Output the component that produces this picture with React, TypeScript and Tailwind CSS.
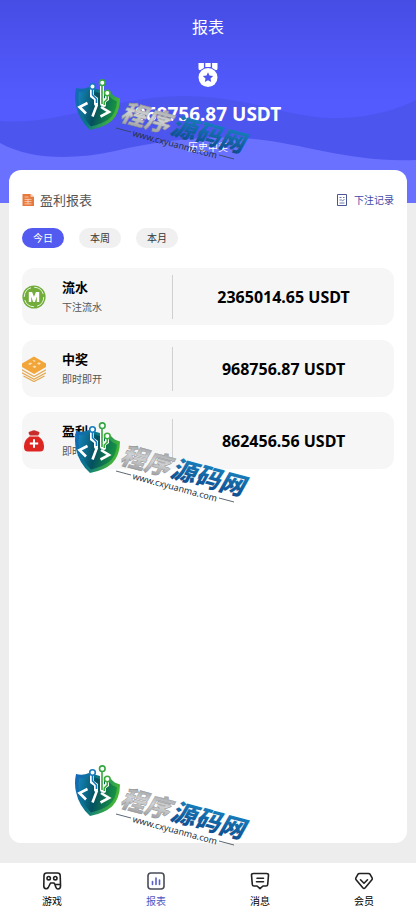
import { useState } from 'react';
import type { ReactNode } from 'react';

const tabs = ['今日', '本周', '本月'];

function MedalIcon() {
  return (
    <svg viewBox="0 0 24 24" className="h-6 w-6" fill="#fff" aria-hidden="true">
      <path d="M2.500 0h5.400v5L4 7.200Q2.500 7 2.500 5.500zM9.300 0h5.400v4H9.300zM16.100 0h5.400v5.500q0 1.500-1.500 1.700L16.100 5z" />
      <circle cx="12" cy="14.500" r="9.500" />
      <path d="m12 9.300 1.500 3.300 3.700.4-2.700 2.500.7 3.600-3.200-1.800-3.200 1.800.7-3.600L6.800 13l3.700-.4z" fill="#4f57ee" />
    </svg>
  );
}

function ReportIcon() {
  return (
    <svg viewBox="0 0 12 12" className="h-3 w-3" aria-hidden="true">
      <path d="M.5 0h8L12 3v9H.5z" fill="#e8793c" />
      <path d="M8.500 0v3H12" fill="#f7c7a8" />
      <path d="M2.500 3h4M2.500 5.400h7M2.500 7.600h7M2.500 9.900h7M6 5v5" stroke="#fbd9c3" strokeWidth=".8" fill="none" />
    </svg>
  );
}

function RecordIcon() {
  return (
    <svg viewBox="0 0 12 14" className="h-[14px] w-3" fill="none" stroke="#4a5596" aria-hidden="true">
      <path d="M1.500 1.500h9v11h-9z" />
      <path d="M3.500 4.500h2M7 4.500h1.500M3.500 7h2l1 .7 2-1.200M3.500 10h5" strokeWidth=".8" />
    </svg>
  );
}

function CoinIcon() {
  return (
    <svg viewBox="0 0 24 24" className="h-6 w-6" aria-hidden="true">
      <circle cx="12" cy="12" r="11.600" fill="#72ad3c" />
      <circle cx="12" cy="12" r="9.700" fill="none" stroke="#e4f2d6" strokeWidth="1" strokeDasharray="12 3.200" />
      <path d="M6.800 17V7h3.300l1.900 4.800L13.900 7h3.300v10h-2.400v-5.500L12.900 17h-1.800l-1.900-5.500V17z" fill="#fff" />
    </svg>
  );
}

function LayersIcon() {
  return (
    <svg viewBox="0 0 24 26" className="h-[26px] w-6" aria-hidden="true">
      <path d="M12 .5 24 7.500v3.500L12 18 0 11V7.500z" fill="#f2a63a" />
      <path d="m6 8 2.600-1.500 1.800 1-2.600 1.500zM10.500 4.800l1.500-.9 1.800 1-1.500.9zM15 7.500l2-1.200L19 7.500l-2 1.200zM10.500 10.700l2-1.200 2 1.200-2 1.200z" fill="#fbe2ba" />
      <path d="m0 13.800 12 6.700 12-6.700M0 16.800l12 6.500 12-6.500M1.500 20 12 25.500 22.500 20" fill="none" stroke="#e5aa51" strokeWidth="1.300" />
    </svg>
  );
}

function BagIcon() {
  return (
    <svg viewBox="0 0 24 24" className="h-6 w-6" aria-hidden="true">
      <path d="M6.500 4q0-1.500 1.500-1.500 1.200 0 2-.8 2-1 4 0 .8.8 2 .8 1.500 0 1.500 1.500L16.200 6.500H7.800z" fill="#c92d2b" />
      <path d="M7.500 7.500h9Q22 11.500 22 17v1q0 4.500-4 4.500H6q-4 0-4-4.500v-1q0-5.500 5.500-9.500z" fill="#dd2622" />
      <path d="M12 10.300v8.400M7.800 14.500h8.400" stroke="#fff" strokeWidth="2" />
    </svg>
  );
}

const stats = [
  { title: '流水', note: '下注流水', amount: '2365014.65 USDT', icon: <CoinIcon /> },
  { title: '中奖', note: '即时即开', amount: '968756.87 USDT', icon: <LayersIcon /> },
  { title: '盈利', note: '即时即开', amount: '862456.56 USDT', icon: <BagIcon /> },
];

function NavIcon({ children }: { children: ReactNode }) {
  return (
    <svg
      viewBox="0 0 20 20"
      className="h-5 w-5"
      fill="none"
      stroke="#222"
      strokeWidth="1.600"
      strokeLinejoin="round"
      strokeLinecap="round"
      aria-hidden="true"
    >
      {children}
    </svg>
  );
}

const navItems = [
  {
    label: '游戏',
    icon: (
      <NavIcon>
        <path d="M4.500 2h11q2.500 0 2.700 2.500l.3 9H13l-1-1.500H8.500l-2.200 4.500q-.8 1.300-2.300 1.200-2.200-.2-2.200-2.700L2 4.500Q2.200 2 4.500 2zM18.500 13.500v1.500q0 3-2.500 3-2 0-3-4.500" />
        <circle cx="6.700" cy="7.200" r="1.700" />
        <circle cx="13.300" cy="7.200" r="1.700" />
      </NavIcon>
    ),
  },
  {
    label: '报表',
    icon: (
      <NavIcon>
        <rect x="2" y="2" width="16" height="16" rx="3" stroke="#4a4c58" />
        <path d="M6.500 10.500v3M10 7v6.500M13.500 9v4.500" stroke="#5560c8" />
      </NavIcon>
    ),
  },
  {
    label: '消息',
    icon: (
      <NavIcon>
        <path d="M3.500 2.500h13q2 0 2 1.500l-.8 9.500q-.2 1.500-1.700 1.500h-3l-3 2.700L7 15H4q-1.500 0-1.700-1.500L1.500 4q0-1.500 2-1.500z" />
        <path d="M7 7.200h6.500M6.500 10.800h7" />
      </NavIcon>
    ),
  },
  {
    label: '会员',
    icon: (
      <NavIcon>
        <path d="M5.500 2.500h9q1 0 1.600.8l2 3.500q.6 1-.2 1.900l-6.700 8q-1.200 1.300-2.400 0l-6.700-8q-.8-.9-.2-1.900l2-3.500q.6-.8 1.600-.8z" />
        <path d="m6.500 8.800 3.500 3.500 3.500-3.500" />
      </NavIcon>
    ),
  },
];

function Waves() {
  return (
    <svg
      viewBox="0 0 416 203"
      preserveAspectRatio="none"
      className="absolute inset-0 h-full w-full"
      aria-hidden="true"
    >
      <path d="M0 121C60 126 110 97 180 96C250 95 290 120 340 118C375 117 400 108 416 100V203H0z" fill="#4d55ef" />
      <path d="M0 143C30 160 75 160 115 151C155 142 195 136 240 138C300 141 345 163 416 160V203H0z" fill="#6a71ff" />
    </svg>
  );
}

function Watermark({ id }: { id: string }) {
  return (
    <svg viewBox="0 0 190 90" className="h-[90px] w-[190px]">
      <defs>
        <linearGradient id={`${id}-shield`} x1="0" y1="0" x2="1" y2="0.300">
          <stop offset="0" stopColor="#1769c0" />
          <stop offset=".45" stopColor="#087488" />
          <stop offset="1" stopColor="#45b535" />
        </linearGradient>
        <linearGradient id={`${id}-inner`} x1="0" y1="0" x2="1" y2="0.200">
          <stop offset="0" stopColor="#1686bd" />
          <stop offset=".5" stopColor="#04505f" />
          <stop offset="1" stopColor="#169044" />
        </linearGradient>
        <linearGradient id={`${id}-silver`} x1="0" y1="0" x2="0" y2="1">
          <stop offset="0" stopColor="#85878a" />
          <stop offset=".5" stopColor="#d2d3d4" />
          <stop offset="1" stopColor="#909295" />
        </linearGradient>
        <linearGradient id={`${id}-blue`} x1="0" y1="0" x2="0" y2="1">
          <stop offset="0" stopColor="#1c8dc9" />
          <stop offset="1" stopColor="#0b4588" />
        </linearGradient>
      </defs>
      <path d="M6 13q7 2 13-1l22 6q3 4 9 5.500 0 14-8 22-8 7-22 9.500Q9 45 6 31 4 22 6 13z" fill={`url(#${id}-shield)`} />
      <path d="M9 17q6 1 11-2l19 6q3 4 8 5.500-1 12-8 17.500-7 5-18 7.500-9-9-12-21-1-7 0-13.500z" fill={`url(#${id}-inner)`} />
      <path d="M22 12v9l4 3v5M32 8v21M37 18v6l-3 2v4" fill="none" stroke="#fff" strokeWidth="4" strokeLinecap="round" />
      <g fill="#fff" strokeWidth="1.600">
        <path d="M32 10v19" stroke="#35a642" />
        <circle cx="32.300" cy="7.700" r="2.800" stroke="#35a642" />
        <path d="M22.500 14v6l4 4v4" stroke="#147abd" fill="none" />
        <circle cx="22.500" cy="11.500" r="2.800" stroke="#147abd" />
        <path d="M37.300 21v3l-3 3v3" stroke="#3bab3c" fill="none" />
        <circle cx="37.300" cy="18" r="2.800" stroke="#3bab3c" />
      </g>
      <path
        d="m17.500 28-8 4 6.500 6.500M27 29.500l-4.500 12M31 32l8 5-8.500 4.500"
        fill="none"
        stroke="#fff"
        strokeWidth="2.600"
      />
      <g transform="translate(49 45) rotate(15)">
        <text className="font-['Noto_Sans_CJK_SC',sans-serif] text-[25px] font-black italic">
          <tspan fill={`url(#${id}-silver)`} stroke="#8b8d90" strokeWidth=".4">程序</tspan>
          <tspan fill={`url(#${id}-blue)`} dx="2">源码网</tspan>
        </text>
      </g>
      <g transform="translate(62 61) rotate(15)">
        <text className="font-['Noto_Sans',sans-serif] text-[9px]" fill="#24313d">
          www.cxyuanma.com
        </text>
      </g>
      <path d="M46 53l15 4M149 80l15 4" stroke="#34424e" strokeWidth=".8" />
    </svg>
  );
}

export default function App() {
  const [activeTab, setActiveTab] = useState('今日');
  const [activeNav, setActiveNav] = useState('报表');

  return (
    <div className="relative flex min-h-screen flex-col overflow-hidden bg-[#ededed] font-['Noto_Sans','Noto_Sans_CJK_SC',sans-serif] text-black">
      <header className="relative bg-linear-to-b from-[#464de5] to-[#535bff] to-50% pt-[15px] pb-12 text-center text-white">
        <Waves />
        <div className="relative flex flex-col items-center">
          <h1 className="text-base leading-6">报表</h1>
          <div className="mt-6">
            <MedalIcon />
          </div>
          <p className="mt-[13px] text-[19px] leading-7 font-bold">968756.87 USDT</p>
          <p className="mt-[11px] text-[10px] leading-4">历史中奖</p>
        </div>
      </header>

      <main className="relative z-10 mx-[9px] -mt-[33px] mb-5 flex-1 rounded-xl bg-white px-[13px] pt-5">
        <div className="flex items-center justify-between">
          <h2 className="flex items-center gap-1.5 text-[13px] leading-5 text-[#555]">
            <ReportIcon />
            盈利报表
          </h2>
          <a href="#records" className="flex items-center gap-1.5 text-[10px] leading-5 text-[#3f4aa8]">
            <RecordIcon />
            下注记录
          </a>
        </div>

        <div className="mt-[18px] flex gap-[15px]">
          {tabs.map((tab) => (
            <button
              key={tab}
              type="button"
              onClick={() => setActiveTab(tab)}
              className={`h-5 w-[42px] rounded-full text-[10px] leading-5 ${
                tab === activeTab ? 'bg-[#525af0] text-white' : 'bg-[#f0f0f0] text-[#333]'
              }`}
            >
              {tab}
            </button>
          ))}
        </div>

        <div className="mt-5 flex flex-col gap-[15px]">
          {stats.map((stat) => (
            <section key={stat.title} className="flex h-[57px] items-center rounded-xl bg-[#f6f6f6]">
              <div className="flex w-[150px] items-center gap-4">
                {stat.icon}
                <div>
                  <h3 className="text-[13px] leading-5 font-bold">{stat.title}</h3>
                  <p className="text-[10px] leading-5 text-[#555]">{stat.note}</p>
                </div>
              </div>
              <p className="flex h-11 flex-1 items-center justify-center border-l border-[#d0d0d0] text-base font-bold">
                {stat.amount}
              </p>
            </section>
          ))}
        </div>
      </main>

      <nav className="grid grid-cols-4 bg-white pt-2 pb-1.5">
        {navItems.map(({ label, icon }) => (
          <button
            key={label}
            type="button"
            onClick={() => setActiveNav(label)}
            className={`flex flex-col items-center gap-0.5 text-[10px] leading-4 ${
              label === activeNav ? 'text-[#4c57c4]' : 'text-black'
            }`}
          >
            {icon}
            {label}
          </button>
        ))}
      </nav>

      <div className="pointer-events-none absolute top-[75px] left-[70px] z-20 flex flex-col gap-[253px]">
        <Watermark id="mark-top" />
        <Watermark id="mark-middle" />
        <Watermark id="mark-bottom" />
      </div>
    </div>
  );
}
